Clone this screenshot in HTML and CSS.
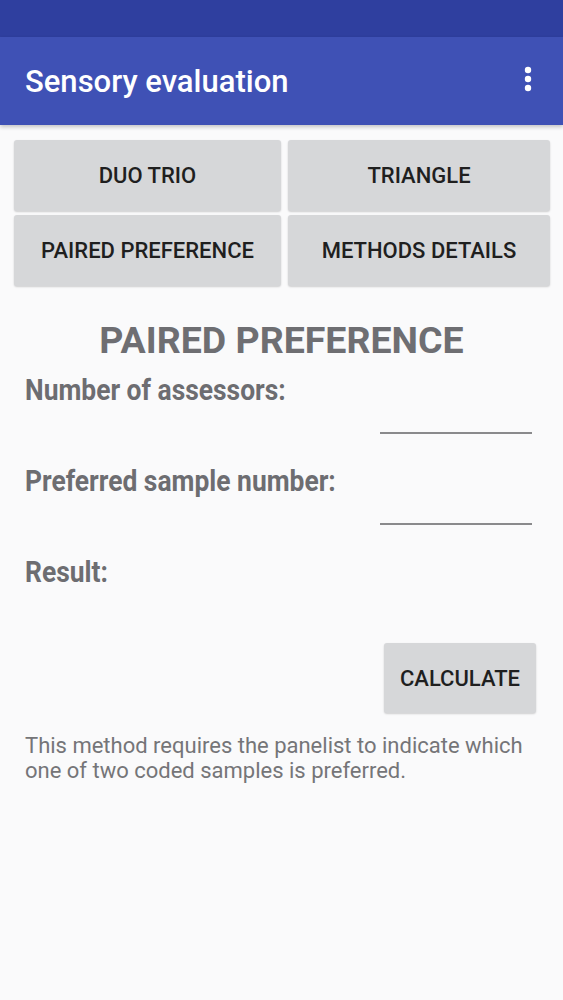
FILE: index.html
```html
<!DOCTYPE html>
<html>
<head>
<meta charset="utf-8">
<link rel="stylesheet" href="styles.css">
</head>
<body>
<div class="screen">
  <div class="status-bar"></div>
  <header class="app-bar">
    <h1 class="app-title">Sensory evaluation</h1>
    <svg class="overflow" width="10" height="30" viewBox="0 0 10 30">
      <circle cx="5" cy="6" r="3.2" fill="#fff"/>
      <circle cx="5" cy="15" r="3.2" fill="#fff"/>
      <circle cx="5" cy="24" r="3.2" fill="#fff"/>
    </svg>
  </header>
  <main class="content">
    <div class="method-grid">
      <button class="btn">DUO TRIO</button>
      <button class="btn">TRIANGLE</button>
      <button class="btn">PAIRED PREFERENCE</button>
      <button class="btn">METHODS DETAILS</button>
    </div>
    <h2 class="method-title">PAIRED PREFERENCE</h2>
    <div class="form">
      <div class="label"><span class="cond">Number of assessors:</span></div>
      <div class="input-row"><div class="input"></div></div>
      <div class="label"><span class="cond">Preferred sample number:</span></div>
      <div class="input-row"><div class="input"></div></div>
      <div class="label"><span class="cond">Result:</span></div>
      <div class="calc-row"><button class="btn btn-calc">CALCULATE</button></div>
      <p class="desc">This method requires the panelist to indicate which one of two coded samples is preferred.</p>
    </div>
  </main>
</div>
</body>
</html>
```

FILE: styles.css
```css
html, body {
  margin: 0;
  padding: 0;
  background: #fafafb;
}
body {
  font-family: Roboto, "Liberation Sans", sans-serif;
}
.screen {
  width: 563px;
  height: 1000px;
  background: #fafafb;
  overflow: hidden;
}
.status-bar {
  height: 37px;
  background: #2f3f9f;
}
.app-bar {
  height: 88px;
  background: #3f51b5;
  display: flex;
  align-items: center;
  justify-content: space-between;
  padding: 0 30px 0 25px;
  box-shadow: 0 2px 4px rgba(0,0,0,0.22);
  position: relative;
  z-index: 1;
}
.app-title {
  margin: 0;
  color: #fff;
  font-size: 31px;
  font-weight: 500;
}
.overflow {
  display: block;
  margin-top: -4px;
}
.content {
  padding: 15px 0 0 14px;
}
.method-grid {
  display: grid;
  grid-template-columns: 267px 262px;
  grid-auto-rows: 71px;
  column-gap: 7px;
  row-gap: 4px;
}
.btn {
  border: none;
  background: #d6d7d9;
  border-radius: 3px;
  box-shadow: 0 1px 2px rgba(0,0,0,0.18);
  font-family: Roboto, "Liberation Sans", sans-serif;
  font-weight: 500;
  font-size: 22px;
  color: #1f1f1f;
  padding: 0;
}
.method-title {
  margin: 33px 0 0 -14px;
  text-align: center;
  font-size: 37.5px;
  line-height: 42px;
  font-weight: 700;
  color: #6e6e72;
}
.form {
  padding: 0 31px 0 11px;
}
.label {
  font-size: 30px;
  font-weight: 700;
  color: #6d6d71;
  line-height: 36px;
  height: 36px;
  white-space: nowrap;
}
.method-title + .form .label:first-child {
  margin-top: 11px;
}
.cond {
  display: inline-block;
  transform: scaleX(0.88);
  transform-origin: left center;
}
.input-row {
  display: flex;
  justify-content: flex-end;
  height: 55px;
  align-items: flex-start;
}
.input {
  width: 152px;
  height: 2px;
  margin-top: 24px;
  background: #8a8a8c;
}
.calc-row {
  display: flex;
  justify-content: flex-end;
  margin-top: 53px;
  margin-right: -4px;
}
.btn-calc {
  width: 152px;
  height: 70px;
}
.desc {
  margin: 20px 0 0 0;
  font-size: 22px;
  line-height: 25px;
  color: #757578;
  padding-right: 0;
}
```
